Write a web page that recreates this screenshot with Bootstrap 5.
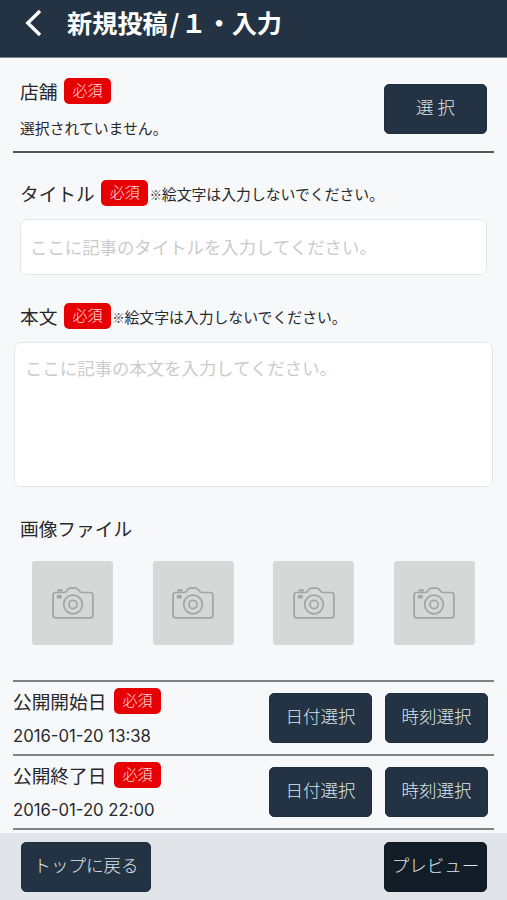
<!DOCTYPE html>
<html lang="ja">
<head>
<meta charset="utf-8">
<meta name="viewport" content="width=device-width, initial-scale=1">
<title>新規投稿</title>
<link href="https://cdn.jsdelivr.net/npm/bootstrap@5.3.0/dist/css/bootstrap.min.css" rel="stylesheet">
<style>
  body { font-family: "Noto Sans CJK JP", sans-serif; background: #f7f8fa; color: #26282b; height: 900px; line-height: 1; }
  .topbar { height: 58px; background: #233343; border-bottom: 1px solid #7d8791; padding: 0 0 11px 25px; }
  .topbar h1 { font-size: 25.2px; font-weight: 700; line-height: 34px; padding-bottom: 2px; margin-left: 25px; }
  .slash { display: inline-block; width: 13.5px; text-align: center; }
  .label-row { height: 26px; white-space: nowrap; }
  .label-text { font-size: 18.7px; line-height: 26px; }
  .required { background: #e60003; color: #ffe3e0; width: 47px; height: 26px; border-radius: 5px; font-size: 15px; font-weight: 300; line-height: 24px; padding: 0; margin-left: 6.6px; }
  .note { font-size: 14.85px; line-height: 28px; }
  .note-mark { display: inline-block; font-size: 12px; font-weight: 900; width: 13.5px; padding-left: 1.5px; }
  .btn-navy { --bs-btn-bg: #233343; --bs-btn-color: #dfe5ea; --bs-btn-border-color: #1f2e3d; --bs-btn-hover-bg: #2c4054; --bs-btn-hover-color: #fff; --bs-btn-border-radius: 5px; width: 103px; height: 50px; padding: 0 0 4px; font-size: 17.5px; font-weight: 300; line-height: 44px; }
  .btn-ink { --bs-btn-bg: #131d27; --bs-btn-border-color: #0f1821; }
  .btn-back { width: 130px; }
  .rule-line { border-bottom: 2px solid #55575a; margin: 0 13px; }
  .store { height: 93px; padding: 20px 7px 0; }
  .store .btn { margin-top: 6px; }
  .store .note { margin-top: 10px; }
  .field-title { padding: 27px 20px 0; }
  .field-body { padding: 28px 14px 0; }
  .field-body .label-row { padding-left: 6px; }
  .form-control { border-color: #e3e5e8; border-radius: 7px; background: #fff; color: #26282b; font-size: 17.4px; }
  .form-control::placeholder { color: #cbcbcb; }
  .title-input { height: 56px; margin-top: 13px; padding: 0 9px 2px; }
  .body-input { height: 145px; margin-top: 13px; padding: 12px 10px; line-height: 26px; resize: none; }
  .files { padding: 28px 20px 0; }
  .thumbs { padding: 20px 12px 0; gap: 39.5px; }
  .thumb { width: 81px; height: 84px; background: #d6d8d7; border-radius: 3px; }
  .schedule { margin: 35px 13px 0; border-top: 2px solid #7f8183; }
  .period { height: 74px; border-bottom: 2px solid #7f8183; padding-right: 6px; }
  .period .label-row { margin-top: 6px; }
  .period .required { margin-left: 7.6px; }
  .period .btn-group-plain { gap: 13px; }
  .stamp { font-family: Inter, "Noto Sans CJK JP", sans-serif; font-size: 16.7px; line-height: 24px; margin-top: 10px; }
  .bottombar { height: 67px; background: #e1e4e9; padding: 9px 20px 0 21px; }
</style>
</head>
<body class="d-flex flex-column overflow-hidden">
<svg class="d-none" xmlns="http://www.w3.org/2000/svg">
  <symbol id="camera" viewBox="0 0 42 34">
    <g fill="none" stroke="#a1a4a3" stroke-width="1.7" stroke-linejoin="round">
      <path d="M3.5 6.5H12c1.6 0 2.4-.8 3.1-2.1.8-1.6 1.6-2.3 3.2-2.3h5.4c1.6 0 2.4.7 3.2 2.3.7 1.3 1.5 2.1 3.1 2.1h8.5a2.4 2.4 0 0 1 2.4 2.4v20.6a2.4 2.4 0 0 1-2.4 2.4h-35a2.4 2.4 0 0 1-2.4-2.4V8.9a2.4 2.4 0 0 1 2.4-2.4z"/>
      <circle cx="21" cy="18.5" r="9.3"/>
      <circle cx="21" cy="18.5" r="4.1"/>
    </g>
    <path d="M5.5 5.5V4.2q0-.9.9-.9h3.4q.9 0 .9.9v1.3z" fill="#a1a4a3"/>
    <rect x="4.8" y="9" width="5" height="3.4" rx="1" fill="#a1a4a3"/>
  </symbol>
</svg>

<header class="topbar d-flex align-items-center text-white flex-shrink-0">
  <svg width="17" height="28" viewBox="0 0 17 28" fill="none" stroke="#fff" stroke-width="3.4"><path d="M15 2 2.8 14 15 26"/></svg>
  <h1 class="mb-0 text-nowrap">新規投稿<span class="slash">/</span>１・入力</h1>
</header>

<main class="flex-grow-1">
  <section class="rule-line">
    <div class="store d-flex justify-content-between">
      <div>
        <div class="label-row d-flex"><span class="label-text">店舗</span><span class="badge required">必須</span></div>
        <div class="note">選択されていません。</div>
      </div>
      <button type="button" class="btn btn-navy">選 択</button>
    </div>
  </section>

  <section class="field-title">
    <div class="label-row d-flex"><label class="label-text" for="title">タイトル</label><span class="badge required">必須</span><span class="note"><span class="note-mark">※</span>絵文字は入力しないでください。</span></div>
    <input id="title" class="form-control title-input" type="text" placeholder="ここに記事のタイトルを入力してください。">
  </section>

  <section class="field-body">
    <div class="label-row d-flex"><label class="label-text" for="body">本文</label><span class="badge required">必須</span><span class="note"><span class="note-mark">※</span>絵文字は入力しないでください。</span></div>
    <textarea id="body" class="form-control body-input" placeholder="ここに記事の本文を入力してください。"></textarea>
  </section>

  <section class="files">
    <div class="label-text">画像ファイル</div>
    <div class="thumbs d-flex">
      <div class="thumb d-flex align-items-center justify-content-center flex-shrink-0"><svg width="42" height="34"><use href="#camera"/></svg></div>
      <div class="thumb d-flex align-items-center justify-content-center flex-shrink-0"><svg width="42" height="34"><use href="#camera"/></svg></div>
      <div class="thumb d-flex align-items-center justify-content-center flex-shrink-0"><svg width="42" height="34"><use href="#camera"/></svg></div>
      <div class="thumb d-flex align-items-center justify-content-center flex-shrink-0"><svg width="42" height="34"><use href="#camera"/></svg></div>
    </div>
  </section>

  <section class="schedule">
    <div class="period d-flex justify-content-between">
      <div class="text-nowrap">
        <div class="label-row d-flex"><span class="label-text">公開開始日</span><span class="badge required">必須</span></div>
        <div class="stamp">2016-01-20 13:38</div>
      </div>
      <div class="btn-group-plain d-flex align-items-center">
        <button type="button" class="btn btn-navy">日付選択</button>
        <button type="button" class="btn btn-navy">時刻選択</button>
      </div>
    </div>
    <div class="period d-flex justify-content-between">
      <div class="text-nowrap">
        <div class="label-row d-flex"><span class="label-text">公開終了日</span><span class="badge required">必須</span></div>
        <div class="stamp">2016-01-20 22:00</div>
      </div>
      <div class="btn-group-plain d-flex align-items-center">
        <button type="button" class="btn btn-navy">日付選択</button>
        <button type="button" class="btn btn-navy">時刻選択</button>
      </div>
    </div>
  </section>
</main>

<footer class="bottombar d-flex justify-content-between flex-shrink-0">
  <button type="button" class="btn btn-navy btn-back">トップに戻る</button>
  <button type="button" class="btn btn-navy btn-ink">プレビュー</button>
</footer>
<script src="https://cdn.jsdelivr.net/npm/bootstrap@5.3.0/dist/js/bootstrap.bundle.min.js"></script>
</body>
</html>
